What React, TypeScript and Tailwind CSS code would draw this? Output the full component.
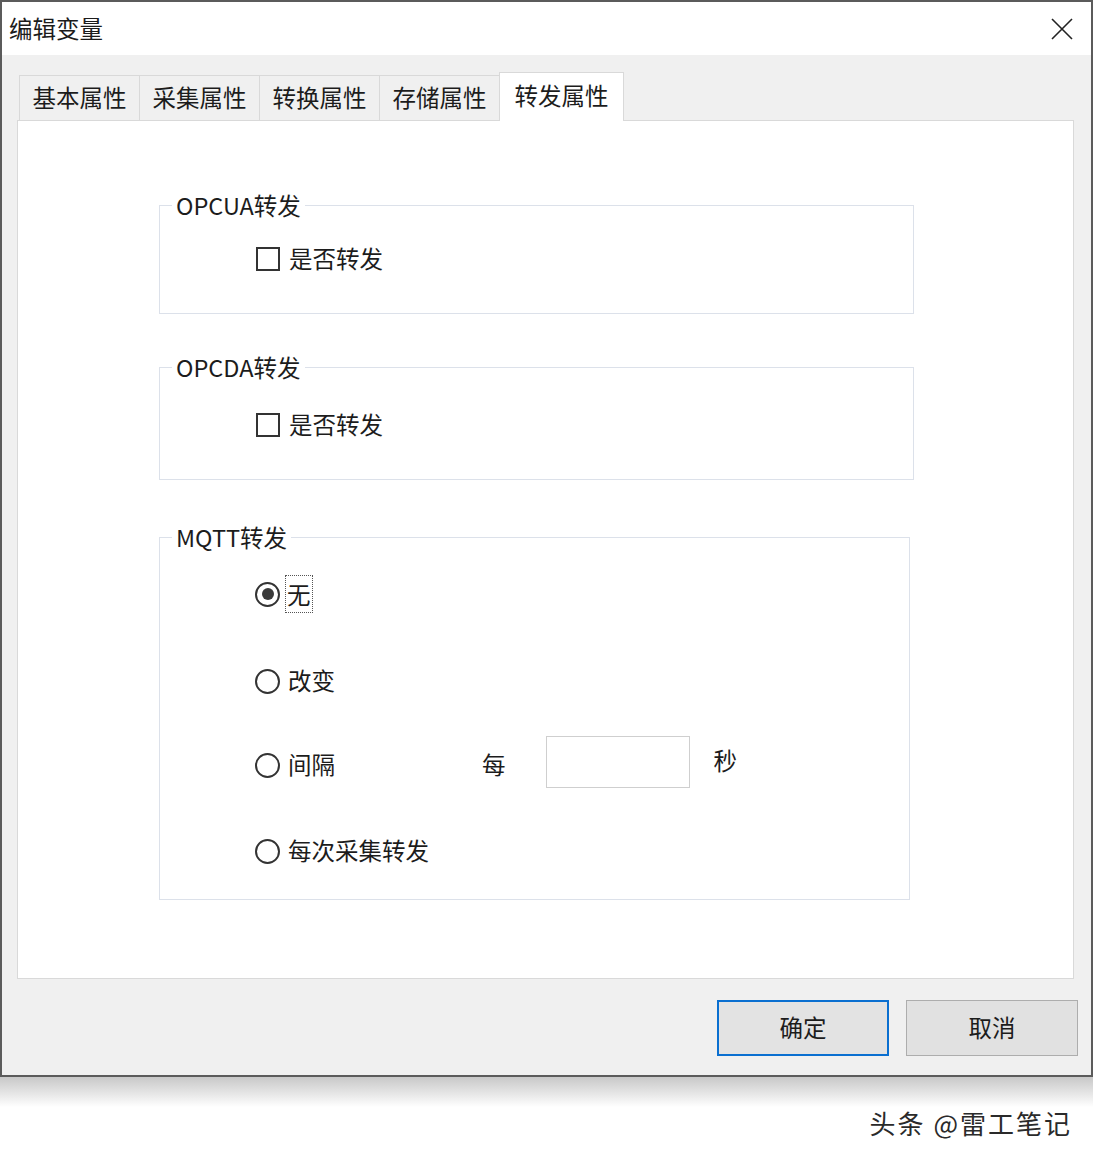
const tabs = ['基本属性', '采集属性', '转换属性', '存储属性'];

function CheckBox() {
  return <div className="h-[24px] w-[24px] border-2 border-[#333] bg-white" />;
}

function Radio({ checked }: { checked?: boolean }) {
  return (
    <div className="flex h-[25px] w-[25px] items-center justify-center rounded-full border-2 border-[#333] bg-white">
      {checked && <div className="h-[12px] w-[12px] rounded-full bg-[#3a3a3a]" />}
    </div>
  );
}

function GroupLabel({ children }: { children: React.ReactNode }) {
  return (
    <div className="-mt-[16px] ml-[12px] w-fit bg-white px-[4px] leading-[30px]">
      {children}
    </div>
  );
}

export default function App() {
  return (
    <div className="h-[1160px] w-[1096px] bg-white font-['Noto_Sans_CJK_SC','Microsoft_YaHei',sans-serif] text-[23.5px] text-[#1c1c1c]">
      <div className="flex h-[1077px] w-[1093px] flex-col border-2 border-[#5b5b5b] bg-[#f0f0f0]">
        {/* title bar */}
        <div className="flex h-[53px] items-center justify-between bg-white pl-[7px] pr-[18px]">
          <span className="leading-none">编辑变量</span>
          <svg width="22" height="22" viewBox="0 0 22 22" className="text-[#222]">
            <path d="M1 1 L21 21 M21 1 L1 21" stroke="currentColor" strokeWidth="1.6" />
          </svg>
        </div>

        <div className="flex flex-1 flex-col px-[15px] pt-[17px]">
          {/* tabs */}
          <div className="relative z-10 flex h-[49px] items-end pl-[2px]">
            {tabs.map((t) => (
              <div
                key={t}
                className="flex h-[46px] w-[120px] items-center justify-center border-b border-l border-t border-[#d9d9d9] bg-[#f0f0f0]"
              >
                {t}
              </div>
            ))}
            <div className="flex h-[49px] w-[125px] items-center justify-center border-x border-t border-[#d9d9d9] bg-white pb-[3px]">
              转发属性
            </div>
          </div>

          {/* panel */}
          <div className="-mt-px h-[859px] w-[1057px] border border-[#d9d9d9] bg-white">
            {/* OPCUA */}
            <div className="ml-[141px] mt-[84px] h-[109px] w-[755px] border border-[#dce1ea]">
              <GroupLabel>OPCUA转发</GroupLabel>
              <div className="mt-[27px] flex h-[24px] items-center pl-[96px]">
                <CheckBox />
                <span className="ml-[9px]">是否转发</span>
              </div>
            </div>

            {/* OPCDA */}
            <div className="ml-[141px] mt-[53px] h-[113px] w-[755px] border border-[#dce1ea]">
              <GroupLabel>OPCDA转发</GroupLabel>
              <div className="mt-[31px] flex h-[24px] items-center pl-[96px]">
                <CheckBox />
                <span className="ml-[9px]">是否转发</span>
              </div>
            </div>

            {/* MQTT */}
            <div className="ml-[141px] mt-[57px] h-[363px] w-[751px] border border-[#dce1ea]">
              <GroupLabel>MQTT转发</GroupLabel>
              <div className="mt-[30px] flex h-[24px] items-center pl-[95px]">
                <Radio checked />
                <span className="ml-[5px] border border-dotted border-[#555] px-px leading-[36px]">无</span>
              </div>
              <div className="mt-[63px] flex h-[24px] items-center pl-[95px]">
                <Radio />
                <span className="ml-[8px]">改变</span>
              </div>
              <div className="mt-[60px] flex h-[24px] items-center pl-[95px]">
                <Radio />
                <span className="ml-[8px] w-[194px]">间隔</span>
                <span>每</span>
                <div className="mb-[7px] ml-[40px] h-[52px] w-[144px] shrink-0 border border-[#cfcfcf] bg-white" />
                <span className="mb-[8px] ml-[24px]">秒</span>
              </div>
              <div className="mt-[62px] flex h-[24px] items-center pl-[95px]">
                <Radio />
                <span className="ml-[8px]">每次采集转发</span>
              </div>
            </div>
          </div>

          {/* buttons */}
          <div className="-mr-[2px] mt-[21px] flex justify-end gap-[17px]">
            <button className="flex h-[56px] w-[172px] items-center justify-center border-2 border-[#0a6fd0] bg-[#e3e3e3]">
              确定
            </button>
            <button className="flex h-[56px] w-[172px] items-center justify-center border border-[#adadad] bg-[#e1e1e1]">
              取消
            </button>
          </div>
        </div>
      </div>

      {/* shadow + watermark */}
      <div className="h-[30px] w-[1093px] bg-gradient-to-b from-[#c8c8c8] to-white" />
      <div className="-mt-[2px] flex h-[36px] items-center justify-end pr-[24px] text-[26px] leading-none tracking-[2px] text-[#2a2a2a] [text-shadow:1px_1px_0_#fff]">
        头条 @雷工笔记
      </div>
    </div>
  );
}
